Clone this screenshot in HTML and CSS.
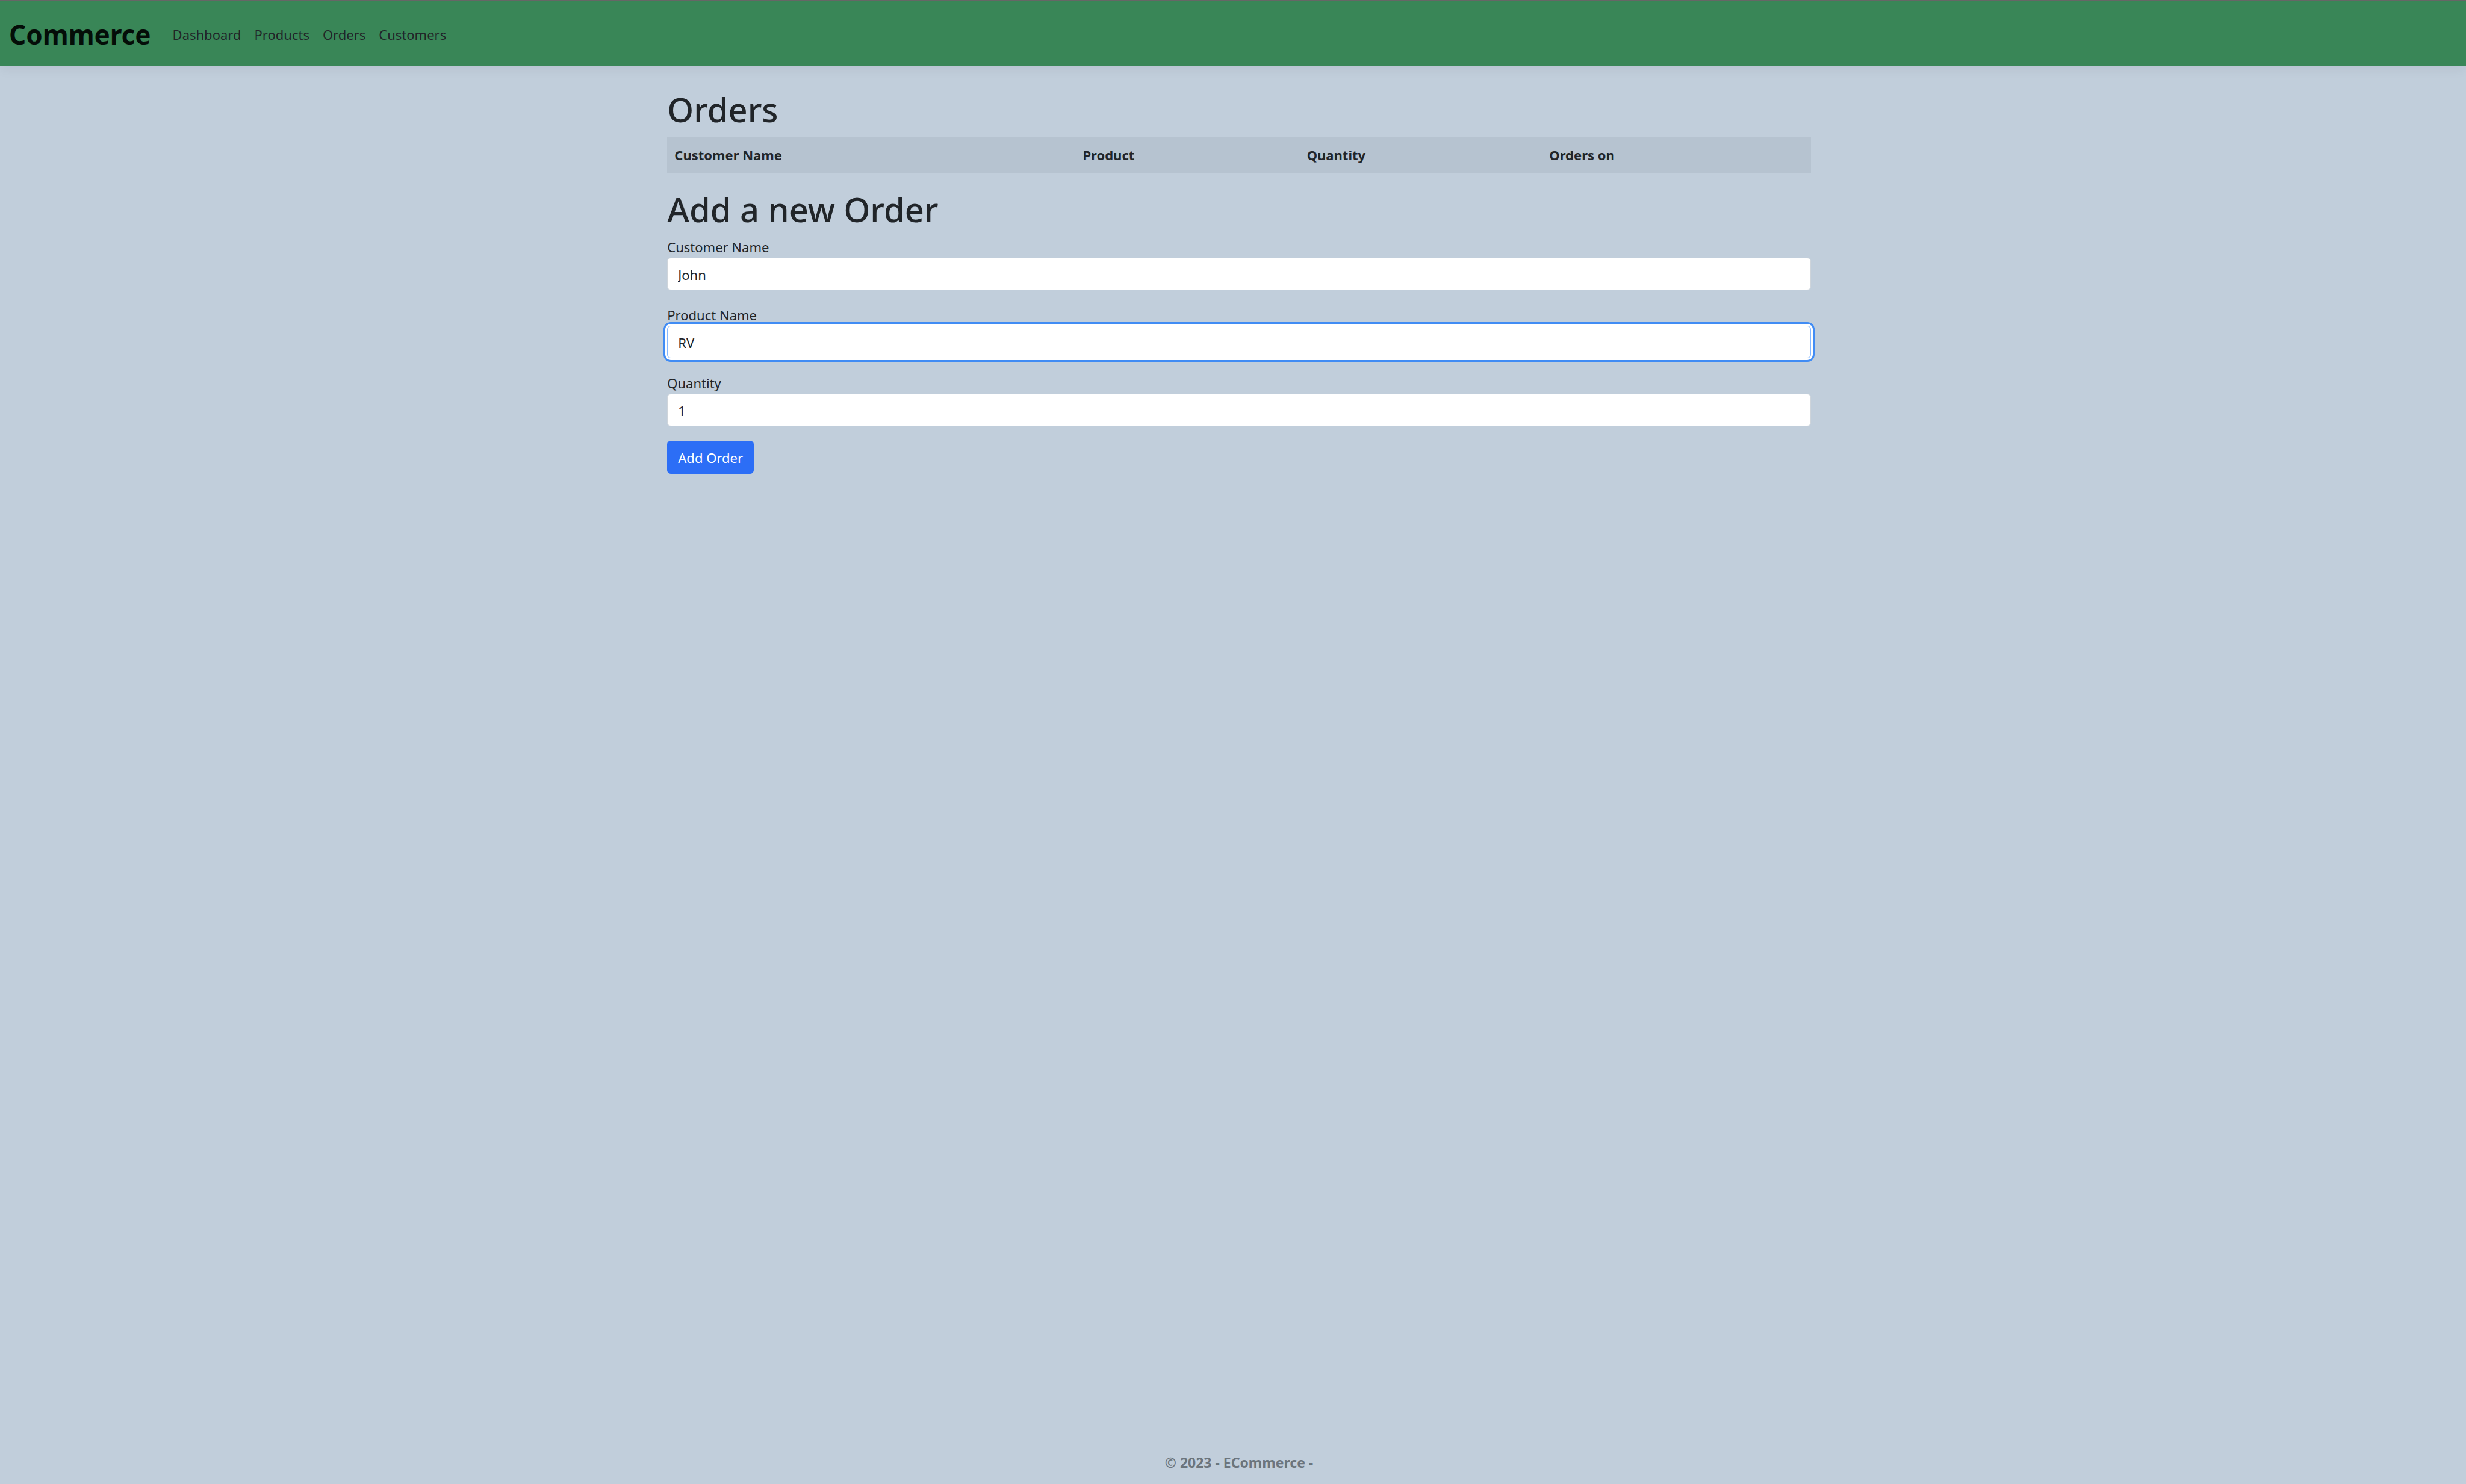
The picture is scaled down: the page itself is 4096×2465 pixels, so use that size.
FILE: index.html
```html
<!DOCTYPE html>
<html lang="en">
<head>
<meta charset="utf-8">
<title>Orders - ECommerce</title>
<link rel="stylesheet" href="styles.css">
</head>
<body>
<header class="navbar">
  <a class="brand" href="#">Commerce</a>
  <nav class="nav">
    <a href="#">Dashboard</a>
    <a href="#">Products</a>
    <a href="#">Orders</a>
    <a href="#">Customers</a>
  </nav>
</header>
<main class="page">
  <div class="container">
    <h1 class="title">Orders</h1>
    <table class="orders">
      <thead>
        <tr>
          <th class="col-customer" scope="col">Customer Name</th>
          <th class="col-product" scope="col">Product</th>
          <th class="col-quantity" scope="col">Quantity</th>
          <th scope="col">Orders on</th>
        </tr>
      </thead>
    </table>
    <h1 class="title">Add a new Order</h1>
    <form class="order-form">
      <div class="field">
        <label for="customer">Customer Name</label>
        <input id="customer" type="text" value="John">
      </div>
      <div class="field">
        <label for="product">Product Name</label>
        <input id="product" class="is-active" type="text" value="RV">
      </div>
      <div class="field">
        <label for="quantity">Quantity</label>
        <input id="quantity" type="text" inputmode="numeric" value="1">
      </div>
      <button class="submit" type="submit">Add Order</button>
    </form>
  </div>
</main>
<footer class="footer">© 2023 - ECommerce -</footer>
</body>
</html>
```
FILE: styles.css
```css
*, *::before, *::after { box-sizing: border-box; }

body {
  margin: 0;
  min-height: 100vh;
  display: flex;
  flex-direction: column;
  background: #c1cedb;
  color: #212529;
  font-family: "Segoe UI", "Noto Sans", sans-serif;
  font-size: 22px;
  line-height: 36px;
}

.navbar {
  display: flex;
  align-items: center;
  gap: 25px;
  height: 110px;
  padding: 3px 15px 0;
  background: #398657;
  border-top: 1px solid #666666;
  border-bottom: 1px solid #dee2e6;
  box-shadow: 0 6px 18px rgba(0, 0, 0, 0.05);
}
.brand {
  color: #040d08;
  font-size: 44px;
  font-weight: 700;
  line-height: 60px;
  text-decoration: none;
}
.nav { display: flex; }
.nav a {
  padding: 11px;
  color: #212529;
  text-decoration: none;
}

.page {
  flex: 1;
  padding: 36px 0 0 20px;
}
.container {
  width: 46.6%;
  margin: 0 auto;
}
.title {
  margin: 0 0 10px;
  font-size: 56px;
  font-weight: 500;
  line-height: 71px;
}

.orders {
  width: 100%;
  margin-bottom: 24px;
  border-collapse: collapse;
  table-layout: fixed;
}
.orders th {
  height: 60px;
  padding: 1px 12px 0;
  background: #b6c3d0;
  border-bottom: 1px solid #dee2e6;
  text-align: left;
  font-weight: 700;
}
.col-customer { width: 35.7%; }
.col-product { width: 19.6%; }
.col-quantity { width: 21.2%; }

.field { margin-bottom: 24px; }
.field label {
  display: block;
  line-height: 35px;
}
.field input {
  display: block;
  width: 100%;
  height: 54px;
  padding: 2px 17px 0;
  background: #ffffff;
  border: 1px solid #ced4da;
  border-radius: 6px;
  color: #212529;
  font: inherit;
}
.field .is-active {
  border-color: #86b7fe;
  outline: 0;
  box-shadow: 0 0 0 3px #ffffff, 0 0 0 6px #418cf4;
}
.submit {
  height: 55px;
  padding: 2px 18px 0;
  background: #2c6ef6;
  border: 0;
  border-radius: 6px;
  color: #ffffff;
  font: inherit;
}

.footer {
  height: 82px;
  padding: 27px 0 0 20px;
  border-top: 1px solid #dee2e6;
  color: #6c757d;
  font-size: 23px;
  font-weight: 700;
  text-align: center;
}
```
